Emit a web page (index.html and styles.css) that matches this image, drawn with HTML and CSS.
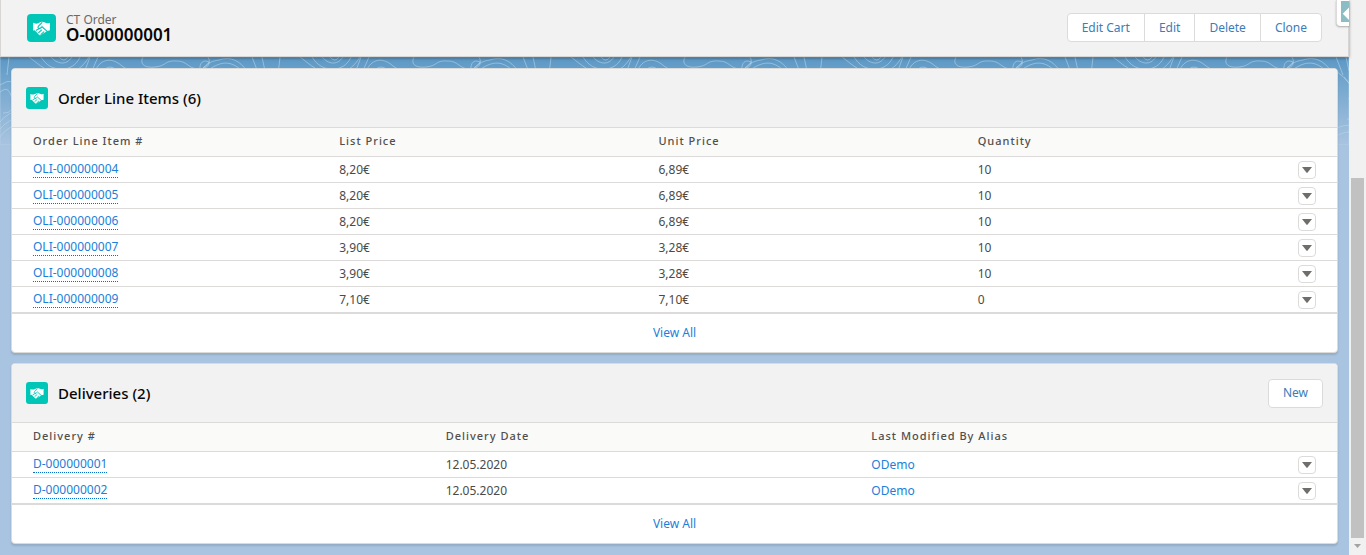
FILE: index.html
```html
<!DOCTYPE html>
<html lang="en">
<head>
    <meta charset="UTF-8">
    <meta name="viewport" content="width=device-width, initial-scale=1.0">
    <title>O-000000001 | CT Order</title>
    <link rel="stylesheet" href="styles.css">
</head>
<body>
    <!-- Shared icons -->
    <svg class="sprite" aria-hidden="true">
        <symbol id="handshake" viewBox="0 0 30 30">
            <path d="M6 9.500q3 1.500 5.500.4l2.500-1.200q2-.9 4 .1l2 .9q2 .8 4-.4v8l-2.800.8-6.400 4.200q-1.300.8-2.500-.2L7.700 17.500 6 17.600z"/>
            <path class="crease" d="M15.500 9.200l-3.800 3.900c-1.300 1.600.4 3.200 2 2.200l1.900-1.600 5.800 5.200M9.500 17.300l3.600-2M12 19.800l3-2.600M14.500 21.900l3-2.800"/>
        </symbol>
        <symbol id="down" viewBox="0 0 10 6">
            <path d="M0 0h10L5.600 5.600q-.6.700-1.200 0z"/>
        </symbol>
    </svg>

    <div class="page">
        <svg class="topography" aria-hidden="true">
            <defs>
                <pattern id="contours" width="271" height="160" patternUnits="userSpaceOnUse">
                    <path d="M143 0c-4 8 3 11 12 10 12-1 9-7 22-6 10 0 11 7 20 8 10 1 15-5 11-12"/>
                    <path d="M200 14c-1-8 3-12 9-9-2 4-5 5-9 9 8-9 13-10 19-11 12-4 21 1 28 11M207 14c12-9 23-12 35 0"/>
                    <path d="M252 0l7 18M262 0l3 14M280 0l-2 18M9 0l-2 18"/>
                    <path d="M29 0c12 9 18 16 34 16S85 6 89 0M41 0c5 8 12 13 23 12 9-1 14-7 16-12M51 0c6 7 15 9 21 0M59 0q5 6 9 0"/>
                    <path d="M84 16l6-16M91 16l7-16M94 18c4-16 17-19 28-9l14 9M101 18c5-10 11-11 21 0"/>
                    <path d="M252 14q30 21 17 52M260 20q23 25 4 56M264 42q9-7 8 8t-9 12M0 35q9-8 12 7T3 56M0 28q15-10 21 6M0 65q8-11 24-12M0 72q8-10 24-13M0 80q8-12 24-14M248 74q10-8 25-5M250 81q10-8 23-6"/>
                </pattern>
            </defs>
            <rect width="100%" height="100%" fill="url(#contours)"/>
        </svg>

        <header class="record-header">
            <span class="icon icon-large"><svg><use href="#handshake"/></svg></span>
            <div class="record-name">
                <p>CT Order</p>
                <h1>O-000000001</h1>
            </div>
            <div class="button-group">
                <button type="button">Edit Cart</button>
                <button type="button">Edit</button>
                <button type="button">Delete</button>
                <button type="button">Clone</button>
            </div>
            <button type="button" class="side-tab" aria-label="Open panel"><svg viewBox="0 0 9 21"><path d="M9 6v14L2 13z"/></svg></button>
        </header>

        <main class="cards">
            <section class="card">
                <div class="card-header">
                    <span class="icon"><svg><use href="#handshake"/></svg></span>
                    <h2>Order Line Items (6)</h2>
                </div>
                <table>
                    <thead>
                        <tr>
                            <th>Order Line Item #</th>
                            <th>List Price</th>
                            <th>Unit Price</th>
                            <th>Quantity</th>
                            <th class="menu-cell"></th>
                        </tr>
                    </thead>
                    <tbody>
                        <tr>
                            <td><a class="record-link" href="#">OLI-000000004</a></td>
                            <td>8,20€</td>
                            <td>6,89€</td>
                            <td>10</td>
                            <td class="menu-cell"><button type="button" class="row-menu" aria-label="Show actions"><svg><use href="#down"/></svg></button></td>
                        </tr>
                        <tr>
                            <td><a class="record-link" href="#">OLI-000000005</a></td>
                            <td>8,20€</td>
                            <td>6,89€</td>
                            <td>10</td>
                            <td class="menu-cell"><button type="button" class="row-menu" aria-label="Show actions"><svg><use href="#down"/></svg></button></td>
                        </tr>
                        <tr>
                            <td><a class="record-link" href="#">OLI-000000006</a></td>
                            <td>8,20€</td>
                            <td>6,89€</td>
                            <td>10</td>
                            <td class="menu-cell"><button type="button" class="row-menu" aria-label="Show actions"><svg><use href="#down"/></svg></button></td>
                        </tr>
                        <tr>
                            <td><a class="record-link" href="#">OLI-000000007</a></td>
                            <td>3,90€</td>
                            <td>3,28€</td>
                            <td>10</td>
                            <td class="menu-cell"><button type="button" class="row-menu" aria-label="Show actions"><svg><use href="#down"/></svg></button></td>
                        </tr>
                        <tr>
                            <td><a class="record-link" href="#">OLI-000000008</a></td>
                            <td>3,90€</td>
                            <td>3,28€</td>
                            <td>10</td>
                            <td class="menu-cell"><button type="button" class="row-menu" aria-label="Show actions"><svg><use href="#down"/></svg></button></td>
                        </tr>
                        <tr>
                            <td><a class="record-link" href="#">OLI-000000009</a></td>
                            <td>7,10€</td>
                            <td>7,10€</td>
                            <td>0</td>
                            <td class="menu-cell"><button type="button" class="row-menu" aria-label="Show actions"><svg><use href="#down"/></svg></button></td>
                        </tr>
                    </tbody>
                </table>
                <a class="view-all" href="#">View All</a>
            </section>

            <section class="card">
                <div class="card-header">
                    <span class="icon"><svg><use href="#handshake"/></svg></span>
                    <h2>Deliveries (2)</h2>
                    <button type="button" class="new-button">New</button>
                </div>
                <table>
                    <thead>
                        <tr>
                            <th>Delivery #</th>
                            <th>Delivery Date</th>
                            <th>Last Modified By Alias</th>
                            <th class="menu-cell"></th>
                        </tr>
                    </thead>
                    <tbody>
                        <tr>
                            <td><a class="record-link" href="#">D-000000001</a></td>
                            <td>12.05.2020</td>
                            <td><a href="#">ODemo</a></td>
                            <td class="menu-cell"><button type="button" class="row-menu" aria-label="Show actions"><svg><use href="#down"/></svg></button></td>
                        </tr>
                        <tr>
                            <td><a class="record-link" href="#">D-000000002</a></td>
                            <td>12.05.2020</td>
                            <td><a href="#">ODemo</a></td>
                            <td class="menu-cell"><button type="button" class="row-menu" aria-label="Show actions"><svg><use href="#down"/></svg></button></td>
                        </tr>
                    </tbody>
                </table>
                <a class="view-all" href="#">View All</a>
            </section>
        </main>
    </div>

    <div class="scrollbar" aria-hidden="true">
        <div class="scroll-track"><div class="scroll-thumb"></div></div>
        <svg class="scroll-arrow" viewBox="0 0 7 4"><path d="M0 0h7L3.500 4z"/></svg>
    </div>
</body>
</html>
```
FILE: styles.css
```css
* {
    box-sizing: border-box;
}

body {
    margin: 0;
    display: flex;
    height: 100vh;
    overflow: hidden;
    font-family: "Noto Sans", "Open Sans", sans-serif;
    font-size: 12px;
    line-height: 18px;
    color: #4a4a48;
}

h1, h2, p {
    margin: 0;
}

a {
    color: #1a80d9;
    text-decoration: none;
}

button {
    font: inherit;
    color: #3a7db8;
    background: #fff;
    border: 1px solid #dddbda;
    border-radius: 4px;
    padding: 0 14px;
    cursor: pointer;
}

.sprite {
    position: absolute;
    width: 0;
    height: 0;
}

.page {
    position: relative;
    flex: 1;
    min-width: 0;
    background: linear-gradient(#5b97c4 57px, #6ca2cb 74px, #a9c4e0 145px);
}

.topography {
    position: absolute;
    top: 57px;
    left: 0;
    width: 100%;
    height: 88px;
    fill: none;
    stroke: #b8d4e8;
    stroke-opacity: 0.6;
}

/* Record header */
.record-header {
    position: relative;
    display: flex;
    align-items: center;
    height: 57px;
    padding: 0 26px 1px 26px;
    background: #f2f2f2;
    border: 1px solid #d8d6d5;
    border-top: 0;
    box-shadow: 0 1px 3px rgba(0, 0, 0, 0.4);
}

.icon {
    display: flex;
    width: 22px;
    height: 22px;
    border-radius: 3px;
    background: #00c6b7;
    fill: #fff;
}

.icon svg {
    width: 100%;
    height: 100%;
}

.icon-large {
    width: 29px;
    height: 28px;
    border-radius: 4px;
}

.crease {
    fill: none;
    stroke: #00c6b7;
    stroke-width: 1.2;
    stroke-linecap: round;
}

.record-name {
    flex: 1;
    margin-left: 10px;
    line-height: 14px;
    color: #6b6967;
}

.record-name h1 {
    font-size: 17px;
    font-weight: 600;
    line-height: 16px;
    color: #080707;
}

.button-group {
    display: flex;
}

.button-group button {
    height: 29px;
    border-radius: 0;
}

.button-group button + button {
    margin-left: -1px;
}

.button-group button:first-child {
    border-radius: 4px 0 0 4px;
}

.button-group button:last-child {
    border-radius: 0 4px 4px 0;
}

.side-tab {
    position: absolute;
    top: 0;
    right: -1px;
    width: 13px;
    height: 26px;
    padding: 1px 0 4px 4px;
    border-width: 0 0 0 1px;
    border-radius: 0 0 0 4px;
    box-shadow: 0 1px 2px rgba(0, 0, 0, 0.3);
}

.side-tab svg {
    display: block;
    width: 100%;
    height: 100%;
    background: #8cbcc4;
    fill: #fff;
}

/* Related lists */
.cards {
    position: relative;
    display: flex;
    flex-direction: column;
    gap: 10px;
    padding: 11px;
}

.card {
    background: #fff;
    border: 1px solid #dddbda;
    border-radius: 4px;
    box-shadow: 0 2px 2px rgba(0, 0, 0, 0.12);
    overflow: hidden;
}

.card-header {
    display: flex;
    align-items: center;
    height: 58px;
    padding: 0 14px;
    background: #f2f2f2;
}

.card-header h2 {
    flex: 1;
    margin-left: 10px;
    font-size: 15px;
    font-weight: 500;
    color: #080707;
}

.new-button {
    height: 29px;
}

table {
    width: 100%;
    table-layout: fixed;
    border-spacing: 0;
}

th, td {
    height: 26px;
    padding: 0 8px;
    text-align: left;
    border-bottom: 1px solid #dddbda;
}

th {
    height: 30px;
    padding-bottom: 2px;
    font-size: 11px;
    font-weight: 500;
    letter-spacing: 1px;
    color: #514f4d;
    background: #fafaf9;
    border-top: 1px solid #dddbda;
}

th:first-child, td:first-child {
    padding-left: 21px;
}

tbody tr:last-child td {
    height: 27px;
    border-bottom-width: 2px;
}

.record-link {
    display: block;
    width: fit-content;
    line-height: 17px;
    margin-bottom: 1px;
    border-bottom: 1px dotted #0070d2;
}

.menu-cell {
    width: 48px;
    padding-left: 9px;
}

.row-menu {
    display: flex;
    align-items: center;
    justify-content: center;
    width: 18px;
    height: 18px;
    padding: 0;
}

.row-menu svg {
    width: 10px;
    height: 6px;
    fill: #706e6b;
}

.view-all {
    display: block;
    padding: 10px 0;
    text-align: center;
}

/* Scrollbar */
.scrollbar {
    display: flex;
    flex-direction: column;
    align-items: center;
    width: 17px;
    background: #f1f1f1;
}

.scroll-track {
    display: flex;
    flex-direction: column;
    justify-content: flex-end;
    flex: 1;
}

.scroll-thumb {
    width: 13px;
    height: 67%;
    background: #c1c1c1;
}

.scroll-arrow {
    width: 7px;
    height: 4px;
    margin: 6px 0 7px;
    fill: #a3a3a3;
}
```
